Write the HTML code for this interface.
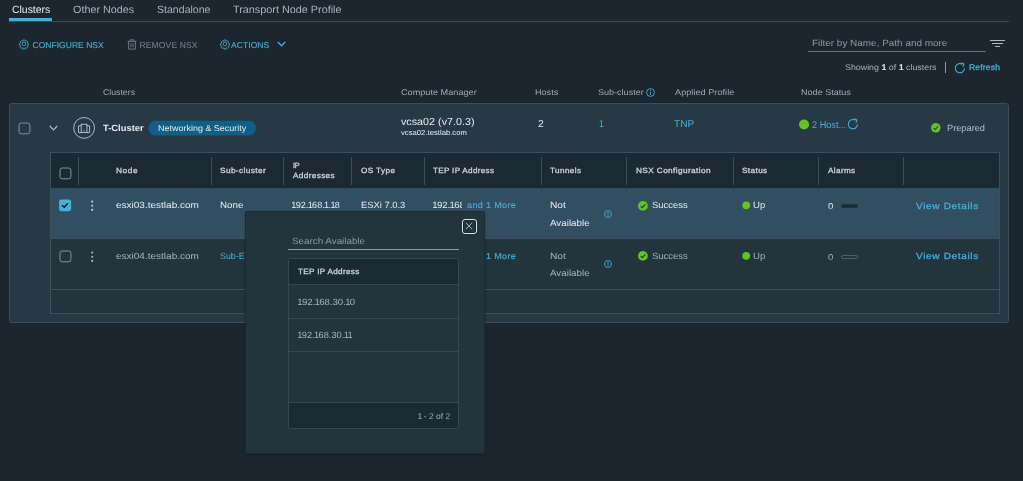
<!DOCTYPE html>
<html>
<head>
<meta charset="utf-8">
<style>
*{box-sizing:border-box;margin:0;padding:0}
html,body{width:1023px;height:481px;overflow:hidden;background:#1b262e;}
body{text-rendering:geometricPrecision;font-family:"Liberation Sans",sans-serif;color:#adbbc4;position:relative;font-size:10px;}
.a{position:absolute;white-space:nowrap;line-height:1;transform-origin:0 0;}
.s{position:absolute;}
svg{position:absolute;overflow:visible}
#root{position:absolute;left:0;top:0;width:1023px;height:481px;will-change:transform;}

</style>
</head>
<body>
<div id="root">
<!-- tabs -->
<div class="s" style="left:9px;top:18px;width:43px;height:3px;background:#49afd9"></div>
<div class="s" style="left:9px;top:21px;width:1000px;height:1px;background:#3b4c57"></div>

<!-- toolbar icons -->
<svg style="left:18.6px;top:39px" width="9.9" height="9.9" viewBox="-1 -1 38 38"><g fill="none" stroke="#49afd9" stroke-width="3.1"><circle cx="18" cy="18" r="7"/><path d="M15 2.5h6l1 4.4 2.6 1.1 3.9-2.4 4.2 4.2-2.4 3.9 1.1 2.6 4.4 1v6l-4.4 1-1.1 2.6 2.4 3.9-4.2 4.2-3.9-2.4-2.6 1.1-1 4.4h-6l-1-4.4-2.6-1.1-3.9 2.4-4.2-4.2 2.4-3.9-1.1-2.6-4.4-1v-6l4.4-1 1.1-2.6-2.4-3.9 4.2-4.2 3.9 2.4 2.6-1.1z"/></g></svg>
<svg style="left:126.6px;top:38.8px" width="10" height="11" viewBox="0 0 10 11"><g fill="none" stroke="#6d7e89" stroke-width="0.95"><path d="M0.6 2.3h8.8M3.3 2.3V0.8h3.4V2.3M1.6 2.3V10.1h6.8V2.3M3.9 4.3v3.9M6.1 4.3v3.9"/></g></svg>
<svg style="left:220px;top:39px" width="9.9" height="9.9" viewBox="-1 -1 38 38"><g fill="none" stroke="#49afd9" stroke-width="3.1"><circle cx="18" cy="18" r="7"/><path d="M15 2.5h6l1 4.4 2.6 1.1 3.9-2.4 4.2 4.2-2.4 3.9 1.1 2.6 4.4 1v6l-4.4 1-1.1 2.6 2.4 3.9-4.2 4.2-3.9-2.4-2.6 1.1-1 4.4h-6l-1-4.4-2.6-1.1-3.9 2.4-4.2-4.2 2.4-3.9-1.1-2.6-4.4-1v-6l4.4-1 1.1-2.6-2.4-3.9 4.2-4.2 3.9 2.4 2.6-1.1z"/></g></svg>
<svg style="left:277px;top:41px" width="9" height="6" viewBox="0 0 9 6"><path d="M0.8 1l3.7 3.8L8.2 1" fill="none" stroke="#49afd9" stroke-width="1.3"/></svg>

<!-- filter -->
<div class="s" style="left:808px;top:51px;width:178px;height:1px;background:#5d6d78"></div>
<div class="s" style="left:989.5px;top:40px;width:15.5px;height:1.2px;background:#aeb9c0"></div>
<div class="s" style="left:992px;top:43px;width:10.5px;height:1.2px;background:#aeb9c0"></div>
<div class="s" style="left:994.5px;top:45.8px;width:5.5px;height:1.2px;background:#aeb9c0"></div>
<div class="s" style="left:945px;top:62px;width:1px;height:11px;background:#8b9ba5"></div>
<svg style="left:954.4px;top:62px" width="12" height="12" viewBox="0 0 11 11"><path d="M9.6 5.7A4.2 4.2 0 1 1 7.6 2.1" fill="none" stroke="#49afd9" stroke-width="1"/><path d="M6.6 0.6l2.6 1.2-1 2.6" fill="none" stroke="#49afd9" stroke-width="1"/></svg>

<!-- sub-cluster info icon -->
<svg style="left:645.7px;top:88px" width="9" height="9" viewBox="0 0 9 9"><circle cx="4.5" cy="4.5" r="3.9" fill="none" stroke="#49afd9" stroke-width="0.9"/><path d="M4.5 3.9v2.9M4.5 2.2v0.9" stroke="#49afd9" stroke-width="0.9"/></svg>

<!-- outer panel -->
<div class="s" style="left:9px;top:103px;width:1000px;height:220px;background:#273945;border:1px solid #3c4f5b;border-radius:3px"></div>
<svg style="left:17.5px;top:121.7px" width="13" height="13" viewBox="0 0 13 13"><rect x="1" y="1" width="10.9" height="10.8" rx="2.3" fill="none" stroke="#8595a0" stroke-width="1"/></svg>
<svg style="left:48.9px;top:124.8px" width="9" height="6" viewBox="0 0 9 6"><path d="M0.8 1l3.7 3.8L8.2 1" fill="none" stroke="#adbbc4" stroke-width="1.2"/></svg>
<svg style="left:73px;top:117px" width="22" height="22" viewBox="0 0 22 22"><circle cx="11.1" cy="10.9" r="10.4" fill="none" stroke="#c8d0d5" stroke-width="0.85"/><g fill="none" stroke="#c8d0d5" stroke-width="0.85"><rect x="8.2" y="7.2" width="5.7" height="8.4"/><path d="M8.2 8.8H5.5v6.8h2.7M13.9 8.8h2.7v6.8h-2.7"/><path d="M10.5 13.8h1.1" stroke-width="1"/></g></svg>
<svg style="left:148px;top:120px" width="109" height="17" viewBox="0 0 109 17"><rect x="0.4" y="0.75" width="107.5" height="14.85" rx="7.4" fill="#0f5f87"/></svg>
<svg style="left:799px;top:119px" width="11" height="11" viewBox="0 0 11 11"><circle cx="5.05" cy="5.5" r="5" fill="#62c420"/></svg>
<svg style="left:846.6px;top:118px" width="12" height="12" viewBox="0 0 11 11"><path d="M9.6 5.7A4.2 4.2 0 1 1 7.6 2.1" fill="none" stroke="#49afd9" stroke-width="0.95"/><path d="M6.6 0.6l2.6 1.2-1 2.6" fill="none" stroke="#49afd9" stroke-width="0.95"/></svg>
<svg style="left:930.8px;top:123px" width="9.6" height="9.6" viewBox="0 0 10 10"><circle cx="5" cy="5" r="5" fill="#62c420"/><path d="M2.6 5.1l1.7 1.7 3.2-3.3" fill="none" stroke="#1f3541" stroke-width="1.05"/></svg>

<!-- inner table -->
<div class="s" style="left:50px;top:152px;width:949.5px;height:161.5px;background:#22343c;border:1px solid #3c4f5b"></div>
<div class="s" style="left:51px;top:153px;width:947.5px;height:35px;background:#1b2a32"></div>
<div class="s" style="left:51px;top:188px;width:947.5px;height:50px;background:#324f62"></div>
<div class="s" style="left:51px;top:238px;width:947.5px;height:1px;background:#3c4f5b"></div>
<div class="s" style="left:51px;top:288.5px;width:947.5px;height:1px;background:#3c4f5b"></div>
<div class="s" style="left:78px;top:157.3px;width:1px;height:27.3px;background:#3c4f5b"></div>
<div class="s" style="left:210.6px;top:157.3px;width:1px;height:27.3px;background:#3c4f5b"></div>
<div class="s" style="left:283.1px;top:157.3px;width:1px;height:27.3px;background:#3c4f5b"></div>
<div class="s" style="left:351.1px;top:157.3px;width:1px;height:27.3px;background:#3c4f5b"></div>
<div class="s" style="left:423.8px;top:157.3px;width:1px;height:27.3px;background:#3c4f5b"></div>
<div class="s" style="left:540.8px;top:157.3px;width:1px;height:27.3px;background:#3c4f5b"></div>
<div class="s" style="left:625.8px;top:157.3px;width:1px;height:27.3px;background:#3c4f5b"></div>
<div class="s" style="left:732.9px;top:157.3px;width:1px;height:27.3px;background:#3c4f5b"></div>
<div class="s" style="left:818.1px;top:157.3px;width:1px;height:27.3px;background:#3c4f5b"></div>
<div class="s" style="left:903.2px;top:157.3px;width:1px;height:27.3px;background:#3c4f5b"></div>
<svg style="left:58.6px;top:167.1px" width="13" height="13" viewBox="0 0 13 13"><rect x="1" y="1" width="10.9" height="10.8" rx="2.3" fill="none" stroke="#8595a0" stroke-width="1"/></svg>
<!-- row1 -->
<svg style="left:59px;top:199px" width="13" height="13" viewBox="0 0 13 13"><rect x="0.1" y="0.45" width="12" height="11.8" rx="2.3" fill="#49afd9"/><path d="M2.9 6.3l2.4 2 3.6-4.1" fill="none" stroke="#0e171c" stroke-width="1.4"/></svg>
<svg style="left:90px;top:199px" width="5" height="13" viewBox="0 0 5 13"><g fill="#c3ccd2"><circle cx="2.2" cy="2.6" r="1.05"/><circle cx="2.2" cy="6.8" r="1.05"/><circle cx="2.2" cy="10.9" r="1.05"/></g></svg>
<svg style="left:604.4px;top:209.9px" width="8" height="8" viewBox="0 0 9 9"><circle cx="4.5" cy="4.5" r="3.9" fill="none" stroke="#49afd9" stroke-width="1"/><path d="M4.5 2.2v3M4.5 6v1" stroke="#49afd9" stroke-width="1.1"/></svg>
<svg style="left:637.8px;top:200.8px" width="9.8" height="9.8" viewBox="0 0 10 10"><circle cx="5" cy="5" r="5" fill="#62c420"/><path d="M2.6 5.1l1.7 1.7 3.2-3.3" fill="none" stroke="#1f3541" stroke-width="1.05"/></svg>
<svg style="left:742px;top:201px" width="9" height="9" viewBox="0 0 9 9"><circle cx="4.2" cy="4.3" r="3.9" fill="#62c420"/></svg>
<div class="s" style="left:841.2px;top:204.2px;width:17.3px;height:4px;border-radius:2px;background:#1b2a32;border:0.5px solid #22343c"></div>
<!-- row2 -->
<svg style="left:58.6px;top:249.5px" width="13" height="13" viewBox="0 0 13 13"><rect x="1" y="1" width="10.9" height="10.8" rx="2.3" fill="none" stroke="#8595a0" stroke-width="1"/></svg>
<svg style="left:90px;top:249.5px" width="5" height="13" viewBox="0 0 5 13"><g fill="#a9b6be"><circle cx="2.2" cy="2.6" r="1.05"/><circle cx="2.2" cy="6.8" r="1.05"/><circle cx="2.2" cy="10.9" r="1.05"/></g></svg>
<svg style="left:604.4px;top:260.4px" width="8" height="8" viewBox="0 0 9 9"><circle cx="4.5" cy="4.5" r="3.9" fill="none" stroke="#49afd9" stroke-width="1"/><path d="M4.5 2.2v3M4.5 6v1" stroke="#49afd9" stroke-width="1.1"/></svg>
<svg style="left:637.8px;top:251.3px" width="9.8" height="9.8" viewBox="0 0 10 10"><circle cx="5" cy="5" r="5" fill="#62c420"/><path d="M2.6 5.1l1.7 1.7 3.2-3.3" fill="none" stroke="#1f3541" stroke-width="1.05"/></svg>
<svg style="left:742px;top:251px" width="9" height="9" viewBox="0 0 9 9"><circle cx="4.2" cy="4.8" r="3.9" fill="#62c420"/></svg>
<div class="s" style="left:841.2px;top:254.7px;width:17.3px;height:4px;border-radius:2px;border:0.7px solid #4d626f"></div>

<div class="a" style="left:11.75px;top:5.00px;font-size:10.5px;color:#e9ecef;transform:scaleX(0.9931)">Clusters</div>
<div class="a" style="left:72.50px;top:5.00px;font-size:10.5px;color:#a6b4bd;transform:scaleX(1.0289)">Other Nodes</div>
<div class="a" style="left:156.50px;top:5.00px;font-size:10.5px;color:#a6b4bd;transform:scaleX(1.0068)">Standalone</div>
<div class="a" style="left:233.25px;top:5.00px;font-size:10.5px;color:#a6b4bd;transform:scaleX(1.0309)">Transport Node Profile</div>
<div class="a" style="left:32.50px;top:41.00px;font-size:8.5px;color:#49afd9;-webkit-text-stroke:0.12px #49afd9;letter-spacing:0.034px">CONFIGURE NSX</div>
<div class="a" style="left:139.50px;top:41.00px;font-size:8.5px;color:#6d7e89;-webkit-text-stroke:0.12px #6d7e89;letter-spacing:0.146px">REMOVE NSX</div>
<div class="a" style="left:231.00px;top:41.00px;font-size:8.5px;color:#49afd9;-webkit-text-stroke:0.12px #49afd9;letter-spacing:0.078px">ACTIONS</div>
<div class="a" style="left:812.30px;top:39.00px;font-size:9px;color:#8b9ba5;transform:scaleX(1.1047)">Filter by Name, Path and more</div>
<div class="a" style="left:845.30px;top:64.00px;font-size:8.25px;color:#a6b4bd;transform:scaleX(1.0723)">Showing <b style="color:#e9ecef">1</b> of <b style="color:#e9ecef">1</b> clusters</div>
<div class="a" style="left:968.80px;top:64.00px;font-size:8.25px;color:#49afd9;-webkit-text-stroke:0.3px #49afd9;letter-spacing:0.165px;transform:scaleX(1.0342)">Refresh</div>
<div class="a" style="left:103.00px;top:89.00px;font-size:8.25px;color:#9eacb5;transform:scaleX(1.0573)">Clusters</div>
<div class="a" style="left:400.50px;top:89.00px;font-size:8.25px;color:#9eacb5;transform:scaleX(1.1076)">Compute Manager</div>
<div class="a" style="left:534.80px;top:89.00px;font-size:8.25px;color:#9eacb5;transform:scaleX(1.0999)">Hosts</div>
<div class="a" style="left:597.60px;top:89.00px;font-size:8.25px;color:#9eacb5;transform:scaleX(1.0950)">Sub-cluster</div>
<div class="a" style="left:674.90px;top:89.00px;font-size:8.25px;color:#9eacb5;transform:scaleX(1.1146)">Applied Profile</div>
<div class="a" style="left:800.90px;top:89.00px;font-size:8.25px;color:#9eacb5;transform:scaleX(1.0990)">Node Status</div>
<div class="a" style="left:103.40px;top:124.00px;font-size:9px;color:#e9ecef;font-weight:bold;transform:scaleX(1.0432)">T-Cluster</div>
<div class="a" style="left:157.80px;top:124.00px;font-size:8.5px;color:#e9ecef;transform:scaleX(1.0559)">Networking &amp; Security</div>
<div class="a" style="left:400.80px;top:118.00px;font-size:10.2px;color:#e9ecef;transform:scaleX(1.0552)">vcsa02 (v7.0.3)</div>
<div class="a" style="left:400.80px;top:129.00px;font-size:7.3px;color:#e9ecef;transform:scaleX(1.0549)">vcsa02.testlab.com</div>
<div class="a" style="left:537.90px;top:120.00px;font-size:10px;color:#e9ecef;transform:scaleX(1.0247)">2</div>
<div class="a" style="left:598.60px;top:120.00px;font-size:10px;color:#49afd9;transform:scaleX(0.8629)">1</div>
<div class="a" style="left:674.20px;top:120.00px;font-size:9.8px;color:#49afd9;transform:scaleX(1.0301)">TNP</div>
<div class="a" style="left:812.20px;top:121.00px;font-size:9.8px;color:#49afd9;transform:scaleX(0.9346)">2 Host...</div>
<div class="a" style="left:947.00px;top:124.00px;font-size:9px;color:#b4c0c8;transform:scaleX(1.0262)">Prepared</div>
<div class="a" style="left:115.50px;top:167.00px;font-size:7.6px;color:#ccd5da;-webkit-text-stroke:0.3px #ccd5da;letter-spacing:0.534px;transform:scaleX(1.0882)">Node</div>
<div class="a" style="left:220.00px;top:167.00px;font-size:7.6px;color:#ccd5da;-webkit-text-stroke:0.3px #ccd5da;letter-spacing:0.348px;transform:scaleX(1.0906)">Sub-cluster</div>
<div class="a" style="left:360.70px;top:167.00px;font-size:7.6px;color:#ccd5da;-webkit-text-stroke:0.3px #ccd5da;letter-spacing:0.368px;transform:scaleX(1.0750)">OS Type</div>
<div class="a" style="left:433.10px;top:167.00px;font-size:7.6px;color:#ccd5da;-webkit-text-stroke:0.3px #ccd5da;letter-spacing:0.285px;transform:scaleX(1.0695)">TEP IP Address</div>
<div class="a" style="left:550.40px;top:167.00px;font-size:7.6px;color:#ccd5da;-webkit-text-stroke:0.3px #ccd5da;letter-spacing:0.350px;transform:scaleX(1.0786)">Tunnels</div>
<div class="a" style="left:635.70px;top:167.00px;font-size:7.6px;color:#ccd5da;-webkit-text-stroke:0.3px #ccd5da;letter-spacing:0.347px;transform:scaleX(1.0883)">NSX Configuration</div>
<div class="a" style="left:742.20px;top:167.00px;font-size:7.6px;color:#ccd5da;-webkit-text-stroke:0.3px #ccd5da;letter-spacing:0.352px;transform:scaleX(1.0818)">Status</div>
<div class="a" style="left:827.90px;top:167.00px;font-size:7.6px;color:#ccd5da;-webkit-text-stroke:0.3px #ccd5da;letter-spacing:0.343px;transform:scaleX(1.0726)">Alarms</div>
<div class="a" style="left:292.70px;top:162.00px;font-size:7.6px;color:#ccd5da;-webkit-text-stroke:0.3px #ccd5da;letter-spacing:-0.300px;transform:scaleX(0.9583)">IP</div>
<div class="a" style="left:292.70px;top:172.00px;font-size:7.6px;color:#ccd5da;-webkit-text-stroke:0.3px #ccd5da;letter-spacing:0.344px;transform:scaleX(1.0766)">Addresses</div>
<div class="a" style="left:115.70px;top:201.00px;font-size:9px;color:#e9ecef;transform:scaleX(1.1121)">esxi03.testlab.com</div>
<div class="a" style="left:220.00px;top:201.00px;font-size:9px;color:#e9ecef;transform:scaleX(1.0876)">None</div>
<div class="a" style="left:466.90px;top:201.00px;font-size:8.5px;color:#49afd9;-webkit-text-stroke:0.12px #49afd9;letter-spacing:0.317px;transform:scaleX(1.0664)">and 1 More</div>
<div class="a" style="left:550.40px;top:201.00px;font-size:9px;color:#e9ecef;transform:scaleX(1.1273)">Not</div>
<div class="a" style="left:550.40px;top:219.00px;font-size:9px;color:#e9ecef;transform:scaleX(1.0887)">Available</div>
<div class="a" style="left:652.40px;top:201.00px;font-size:9px;color:#e9ecef;transform:scaleX(1.0525)">Success</div>
<div class="a" style="left:752.70px;top:201.00px;font-size:9px;color:#e9ecef;transform:scaleX(1.0681)">Up</div>
<div class="a" style="left:828.20px;top:202.00px;font-size:8.5px;color:#e9ecef;transform:scaleX(1.1195)">0</div>
<div class="a" style="left:916.00px;top:202.00px;font-size:9px;color:#49afd9;-webkit-text-stroke:0.25px #49afd9;letter-spacing:0.554px;transform:scaleX(1.1235)">View Details</div>
<div class="a" style="left:115.70px;top:252.00px;font-size:9px;color:#a6b4bd;transform:scaleX(1.1121)">esxi04.testlab.com</div>
<div class="a" style="left:220.00px;top:252.00px;font-size:9px;color:#49afd9;transform:scaleX(0.9875)">Sub-EAST</div>
<div class="a" style="left:466.90px;top:252.00px;font-size:8.5px;color:#49afd9;-webkit-text-stroke:0.12px #49afd9;letter-spacing:0.317px;transform:scaleX(1.0664)">and 1 More</div>
<div class="a" style="left:550.40px;top:252.00px;font-size:9px;color:#a6b4bd;transform:scaleX(1.1273)">Not</div>
<div class="a" style="left:550.40px;top:269.00px;font-size:9px;color:#a6b4bd;transform:scaleX(1.0887)">Available</div>
<div class="a" style="left:652.40px;top:252.00px;font-size:9px;color:#a6b4bd;transform:scaleX(1.0525)">Success</div>
<div class="a" style="left:752.70px;top:252.00px;font-size:9px;color:#a6b4bd;transform:scaleX(1.0681)">Up</div>
<div class="a" style="left:828.20px;top:253.00px;font-size:8.5px;color:#a6b4bd;transform:scaleX(1.1195)">0</div>
<div class="a" style="left:916.00px;top:252.00px;font-size:9px;color:#49afd9;-webkit-text-stroke:0.25px #49afd9;letter-spacing:0.554px;transform:scaleX(1.1235)">View Details</div>
<div class="a" style="left:292.40px;top:201.00px;font-size:9px;color:#e9ecef;transform:scaleX(1.0116)"><span style="margin:0 -0.08em 0 -0.07em">1</span>92.<span style="margin:0 -0.08em 0 -0.07em">1</span>68.<span style="margin:0 -0.08em 0 -0.07em">1</span>.<span style="margin:0 -0.08em 0 -0.07em">1</span>8</div>
<div class="s" style="left:433.10px;top:201px;width:28.80px;height:20px;overflow:hidden"><div class="a" style="left:0;top:0;font-size:9px;color:#e9ecef;transform:scaleX(1.0657)"><span style="margin:0 -0.08em 0 -0.07em">1</span>92.<span style="margin:0 -0.08em 0 -0.07em">1</span>68.30.<span style="margin:0 -0.08em 0 -0.07em">1</span>0</div></div>
<div class="a" style="left:360.70px;top:201.00px;font-size:9px;color:#e9ecef;transform:scaleX(1.0416)">ESXi 7.0.3</div>

<!-- popup -->
<div class="s" style="left:245px;top:211px;width:240px;height:243px;background:#22343c;border:1px solid #1c2a32;border-radius:2px;box-shadow:0 1px 3px rgba(0,0,0,0.25)"></div>
<div class="s" style="left:461.8px;top:219px;width:15px;height:14.5px;border:1px solid #dfe5e8;border-radius:3px;box-shadow:inset 0 0 0 1px #18242b"></div>
<svg style="left:465.3px;top:222px" width="8" height="8" viewBox="0 0 8 8"><path d="M0.8 0.8l6.4 6.4M7.2 0.8L0.8 7.2" stroke="#adbbc4" stroke-width="0.9"/></svg>
<div class="s" style="left:288px;top:249px;width:171px;height:1px;background:#8b9ba5"></div>
<div class="s" style="left:288px;top:258px;width:171px;height:170.5px;background:#22343c;border:1px solid #35474f;border-radius:2px"></div>
<div class="s" style="left:289px;top:259px;width:169px;height:25px;background:#1b2a32"></div>
<div class="s" style="left:289px;top:284px;width:169px;height:1px;background:#35474f"></div>
<div class="s" style="left:289px;top:318px;width:169px;height:1px;background:#35474f"></div>
<div class="s" style="left:289px;top:351px;width:169px;height:1px;background:#35474f"></div>
<div class="s" style="left:289px;top:402px;width:169px;height:25.5px;background:#1b2a32;border-top:1px solid #35474f"></div>

<div class="a" style="left:292.40px;top:237.00px;font-size:9px;color:#8b9ba5;transform:scaleX(1.0928)">Search Available</div>
<div class="a" style="left:297.60px;top:268.00px;font-size:7.6px;color:#ccd5da;-webkit-text-stroke:0.3px #ccd5da;letter-spacing:0.292px;transform:scaleX(1.0713)">TEP IP Address</div>
<div class="a" style="left:297.60px;top:298.00px;font-size:9px;color:#a6b4bd;transform:scaleX(1.0657)"><span style="margin:0 -0.08em 0 -0.07em">1</span>92.<span style="margin:0 -0.08em 0 -0.07em">1</span>68.30.<span style="margin:0 -0.08em 0 -0.07em">1</span>0</div>
<div class="a" style="left:297.60px;top:331.00px;font-size:9px;color:#a6b4bd;transform:scaleX(1.0319)"><span style="margin:0 -0.08em 0 -0.07em">1</span>92.<span style="margin:0 -0.08em 0 -0.07em">1</span>68.30.<span style="margin:0 -0.08em 0 -0.07em">1</span><span style="margin:0 -0.08em 0 -0.07em">1</span></div>
<div class="a" style="left:417.60px;top:413.00px;font-size:8.25px;color:#a6b4bd;transform:scaleX(1.0268)"><span style="margin:0 -0.08em 0 -0.07em">1</span> - 2 of 2</div>

</div>
</body>
</html>
